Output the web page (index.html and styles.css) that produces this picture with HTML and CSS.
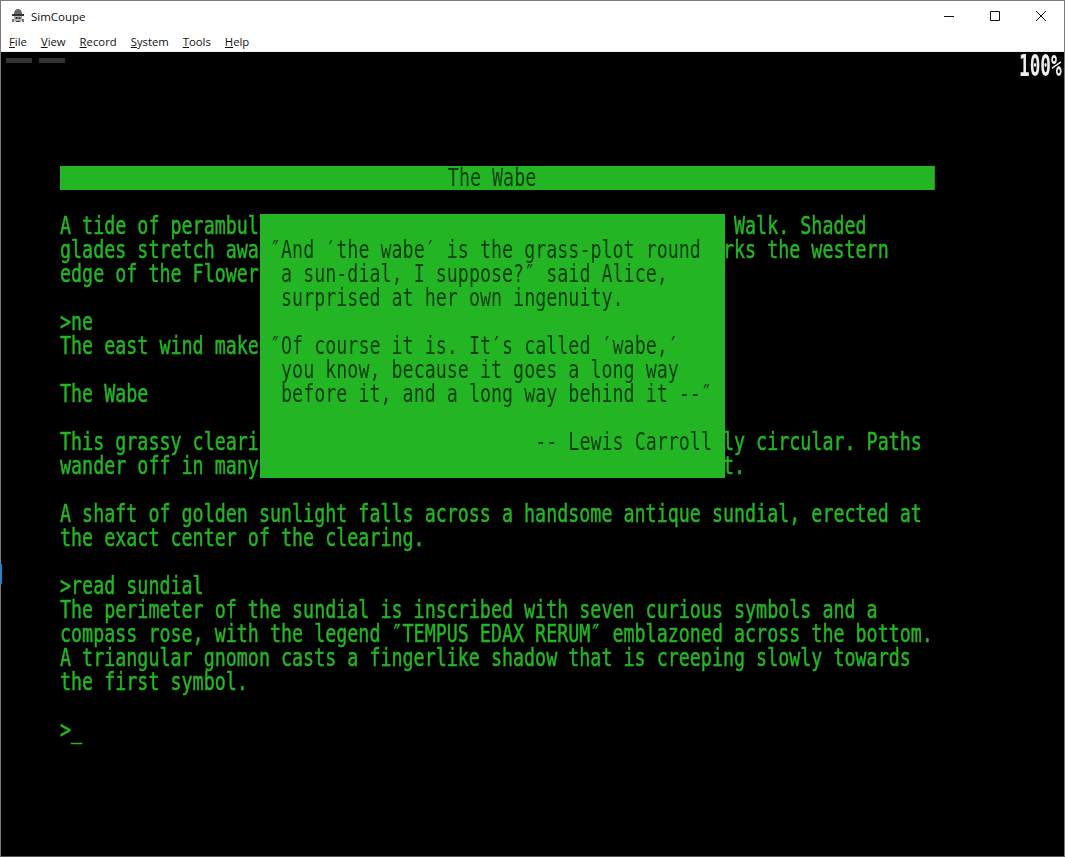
FILE: index.html
```html
<!DOCTYPE html>
<html lang="en">
<head>
<meta charset="utf-8">
<title>SimCoupe</title>
<link rel="stylesheet" href="styles.css">
</head>
<body>
<div class="window">
  <i class="edge-mark"></i>
  <header class="titlebar">
    <div class="title-left">
      <svg class="app-icon" width="16" height="16" viewBox="0 0 16 16">
        <path d="M4 6C4 2.500 6 1 8 1s4 1.500 4 5z" fill="#666"/>
        <path d="M2 6h12v2H2z" fill="#333"/>
        <path d="M4 8h8v4l-1 2H5l-1-2z" fill="#b5b5b5"/>
        <path d="M2 11h2v3H2zM12 11h2v3h-2z" fill="#777"/>
        <path d="M5.500 9h2v2h-2zM8.500 9h2v2h-2zM6 13h4v1H6z" fill="#333"/>
      </svg>
      <span>SimCoupe</span>
    </div>
    <div class="controls">
      <svg class="ctl" width="46" height="30" viewBox="0 0 46 30"><path d="M18 15.500h10" stroke="#111" fill="none"/></svg>
      <svg class="ctl" width="46" height="30" viewBox="0 0 46 30"><path d="M18.500 10.500h9v9h-9z" stroke="#111" fill="none"/></svg>
      <svg class="ctl" width="46" height="30" viewBox="0 0 46 30"><path d="M18 10l10 10M28 10L18 20" stroke="#111" fill="none"/></svg>
    </div>
  </header>
  <nav class="menubar">
    <span class="menu"><u>F</u>ile</span>
    <span class="menu"><u>V</u>iew</span>
    <span class="menu"><u>R</u>ecord</span>
    <span class="menu"><u>S</u>ystem</span>
    <span class="menu"><u>T</u>ools</span>
    <span class="menu"><u>H</u>elp</span>
  </nav>
  <main class="screen">
    <div class="leds"><i class="led"></i><i class="led"></i></div>
    <div class="speed">100%</div>
    <div class="terminal">
      <div class="status">The Wabe</div>
      <pre class="story">
A tide of perambul                                           Walk. Shaded
glades stretch awa                                          rks the western
edge of the Flower

&gt;ne
The east wind make

The Wabe

This grassy cleari                                          ly circular. Paths
wander off in many                                          t.

A shaft of golden sunlight falls across a handsome antique sundial, erected at
the exact center of the clearing.

&gt;read sundial
The perimeter of the sundial is inscribed with seven curious symbols and a
compass rose, with the legend ″TEMPUS EDAX RERUM″ emblazoned across the bottom.
A triangular gnomon casts a fingerlike shadow that is creeping slowly towards
the first symbol.

&gt;_</pre>
    </div>
    <aside class="quote">
<pre class="quote-text">
″And ′the wabe′ is the grass-plot round
 a sun-dial, I suppose?″ said Alice,
 surprised at her own ingenuity.

″Of course it is. It′s called ′wabe,′
 you know, because it goes a long way
 before it, and a long way behind it --″

                        -- Lewis Carroll</pre>
    </aside>
  </main>
</div>
</body>
</html>
```
FILE: styles.css
```css
* { box-sizing: border-box; }
html, body { margin: 0; height: 100%; background: #fff; }
.window {
  position: relative;
  width: 1065px;
  height: 857px;
  display: flex;
  flex-direction: column;
  border: 1px solid #7a7a7a;
  border-bottom-color: #555;
  font-family: "Open Sans", "Noto Sans", sans-serif;
  color: #111;
}
.titlebar {
  height: 30px;
  display: flex;
  justify-content: space-between;
  align-items: center;
  background: #fff;
}
.title-left {
  display: flex;
  align-items: center;
  gap: 5px;
  padding-left: 9px;
  font-size: 11.5px;
}
.controls { display: flex; }
.ctl { display: block; }
.menubar {
  height: 21px;
  display: flex;
  align-items: center;
  gap: 14px;
  padding-left: 8px;
  font-size: 11.3px;
  border-bottom: 1px solid #f0f0f0;
}
.screen {
  position: relative;
  flex: 1;
  background: #000;
  padding: 114px 0 0 59px;
  overflow: hidden;
}
.edge-mark {
  position: absolute;
  left: -1px;
  top: 563px;
  width: 2px;
  height: 20px;
  background: #2a7fc0;
  z-index: 1;
}
.leds {
  position: absolute;
  left: 5px;
  top: 6px;
  display: flex;
  gap: 7px;
  filter: blur(0.6px);
}
.led { width: 26px; height: 5px; background: #333; }
.speed {
  position: absolute;
  left: 1018px;
  top: 7px;
  font: bold 17.7px/14px "DejaVu Sans Mono", monospace;
  color: #eee;
  transform: scaleY(1.7);
  transform-origin: center;
  filter: blur(0.3px);
}
.terminal {
  width: 1144px;
  transform: scaleX(0.7647);
  transform-origin: left top;
  filter: blur(0.35px);
}
.status {
  height: 24px;
  padding-right: 14px;
  background: #24b524;
  color: #0b3d0d;
  text-align: center;
  font: 24px/24px "DejaVu Sans Mono", monospace;
}
.story, .quote-text {
  margin: 0;
  font: 24px/24px "DejaVu Sans Mono", monospace;
  white-space: pre;
}
.story {
  margin-top: 24px;
  color: #24b524;
  -webkit-text-stroke: 0.5px #24b524;
}
.quote {
  position: absolute;
  left: 259px;
  top: 162px;
  width: 465px;
  height: 264px;
  background: #24b524;
  padding: 24px 0 0 10px;
}
.quote-text {
  color: #0b3d0d;
  transform: scaleX(0.7647);
  transform-origin: left top;
  filter: blur(0.35px);
}
```
